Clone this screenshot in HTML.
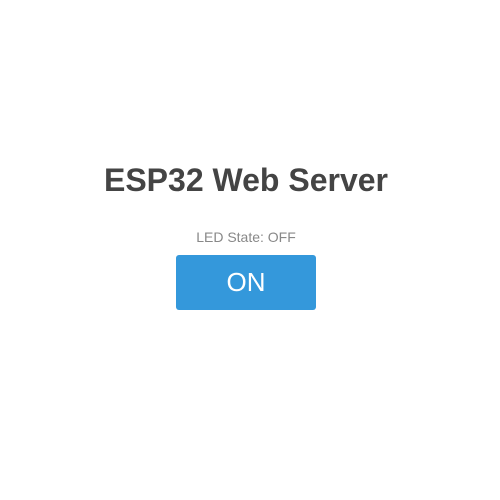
<!DOCTYPE html>
<html><head><style>
html,body{margin:0;padding:0;background:#fff;width:500px;height:500px;overflow:hidden;font-family:"Liberation Sans",sans-serif;}
h1{position:absolute;left:0;width:492px;top:161px;margin:0;text-align:center;font-size:32px;font-weight:bold;color:#444;line-height:38px;}
.s{position:absolute;left:0;width:492px;top:229px;text-align:center;font-size:14px;color:#888;line-height:17px;}
.b{position:absolute;left:176px;top:255px;width:140px;height:55px;background:#3498db;border-radius:3px;color:#fff;font-size:26px;text-align:center;line-height:55px;}
</style></head><body>
<h1>ESP32 Web Server</h1>
<div class="s">LED State: OFF</div>
<div class="b">ON</div>
</body></html>
